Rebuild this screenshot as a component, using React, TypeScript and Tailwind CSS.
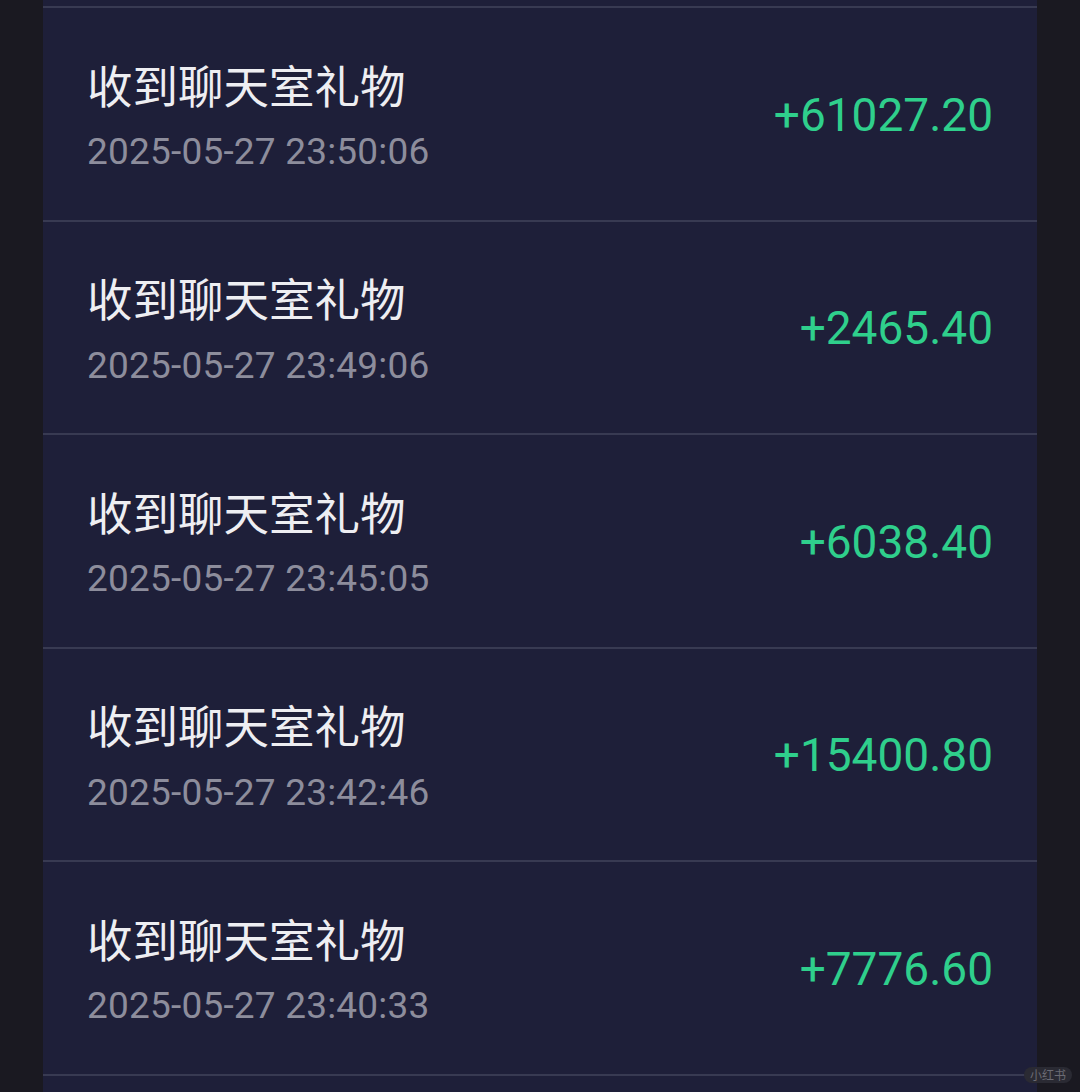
const records = [
  { time: '2025-05-27 23:50:06', amount: '+61027.20' },
  { time: '2025-05-27 23:49:06', amount: '+2465.40' },
  { time: '2025-05-27 23:45:05', amount: '+6038.40' },
  { time: '2025-05-27 23:42:46', amount: '+15400.80' },
  { time: '2025-05-27 23:40:33', amount: '+7776.60' },
];

function Row({ time, amount }: { time: string; amount: string }) {
  return (
    <div className="flex h-[213.5px] shrink-0 items-center justify-between border-b-2 border-[#383a52] pl-[44px] pr-[44px]">
      <div className="mt-[4px] flex flex-col">
        <div className="text-[45.5px] leading-none text-[#eeeef2] [font-family:'Noto_Sans_CJK_SC',sans-serif]">
          收到聊天室礼物
        </div>
        <div className="mt-[26px] text-[37px] leading-none tracking-[0.2px] text-[#8d8d9c] [font-family:Roboto,'Noto_Sans',sans-serif]">
          {time}
        </div>
      </div>
      <div className="mt-[2px] text-[46px] leading-none text-[#2fcf8c] [font-family:Roboto,'Noto_Sans',sans-serif]">
        {amount}
      </div>
    </div>
  );
}

export default function App() {
  return (
    <div className="relative flex h-[1092px] w-[1080px] overflow-hidden bg-[#1a1921]">
      <div className="ml-[43px] flex w-[994px] flex-col bg-[#1e1f39]">
        <div className="h-[8px] shrink-0 border-b-2 border-[#383a52]" />
        {records.map((r) => (
          <Row key={r.time} {...r} />
        ))}
      </div>
      <div className="absolute bottom-[9px] right-[8px] rounded-full bg-[#2a2a33] px-[6px] py-[2px] text-[12px] leading-none text-[#6b6b74] [font-family:'Noto_Sans_CJK_SC',sans-serif]">
        小红书
      </div>
    </div>
  );
}
